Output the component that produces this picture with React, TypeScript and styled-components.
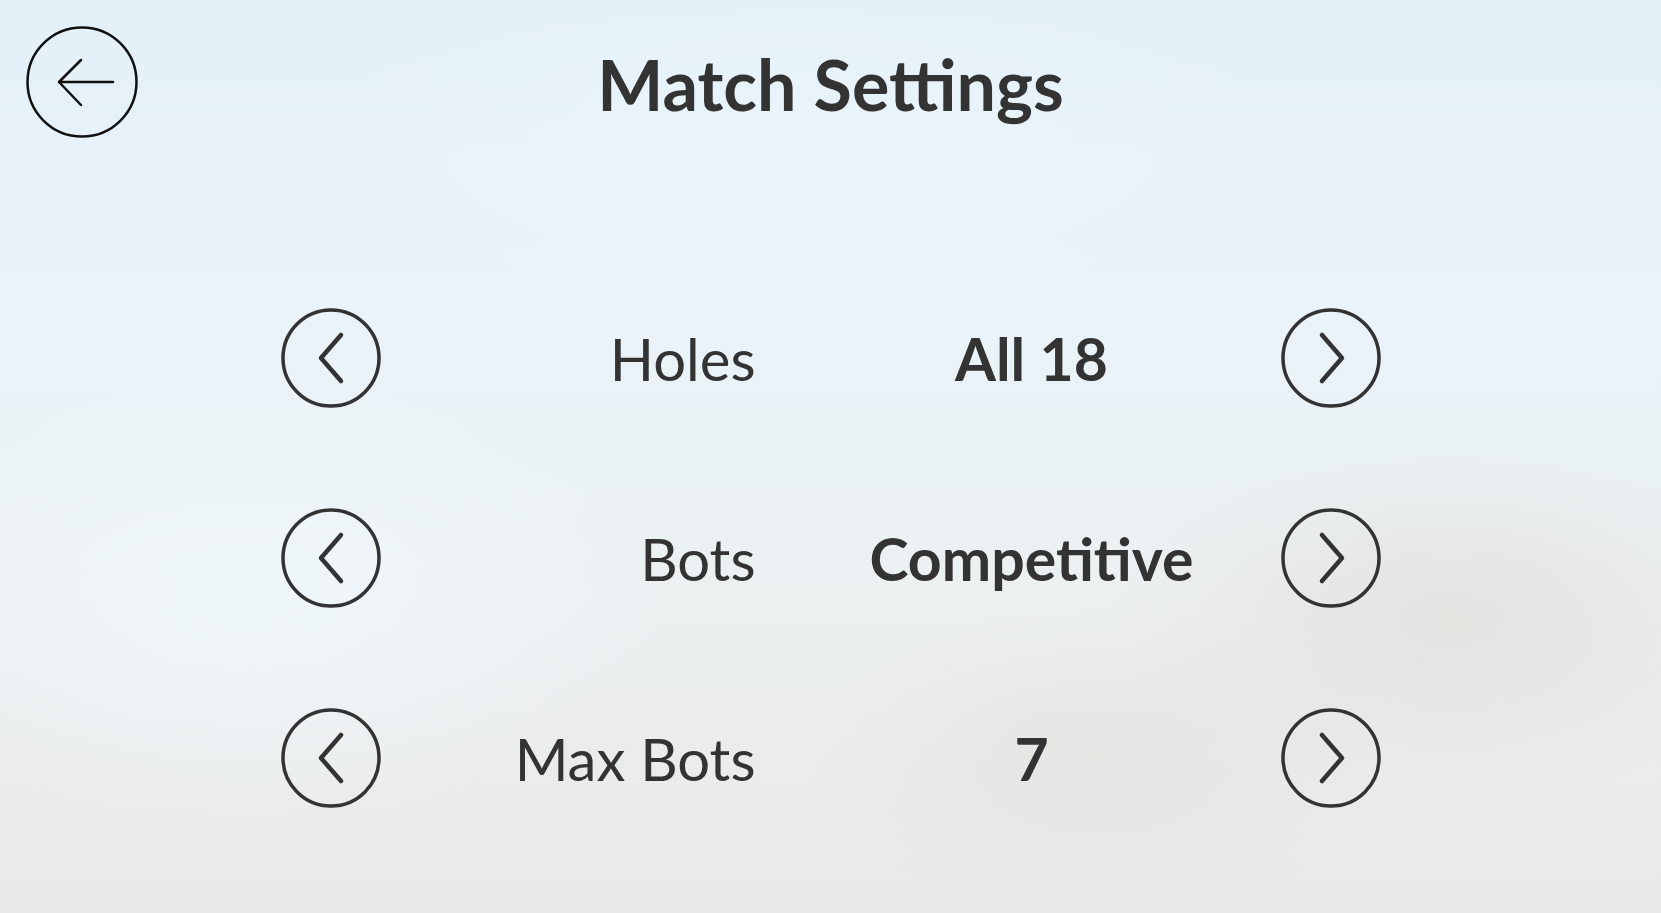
import React from "react";
import styled, { createGlobalStyle } from "styled-components";

const GlobalStyle = createGlobalStyle`
    html, body {
        margin: 0;
        padding: 0;
        height: 100%;
        overflow: hidden;
    }
    body {
        font-family: Lato, "Open Sans", sans-serif;
        color: #333;
    }
`;

const Screen = styled.div`
    width: 100vw;
    height: 100vh;
    box-sizing: border-box;
    background:
        radial-gradient(ellipse 500px 260px at 1450px 620px, rgba(226, 226, 222, 0.9), transparent 70%),
        radial-gradient(ellipse 420px 220px at 1100px 760px, rgba(228, 228, 224, 0.8), transparent 70%),
        radial-gradient(ellipse 600px 320px at 250px 600px, rgba(240, 247, 251, 0.95), transparent 70%),
        radial-gradient(ellipse 700px 260px at 800px 140px, rgba(233, 244, 251, 0.9), transparent 70%),
        linear-gradient(180deg, #e4f0f8 0%, #e9f3f9 35%, #ecf0f1 65%, #e9e9e7 100%);
`;

const Header = styled.div`
    display: grid;
    grid-template-columns: 112px 1fr 112px;
    padding: 26px 26px 0 26px;
`;

const BackButton = styled.button`
    width: 112px;
    height: 112px;
    padding: 0;
    border: none;
    background: none;
    cursor: pointer;
    display: flex;

    svg {
        display: block;
    }
`;

const Title = styled.h1`
    margin: 16px 0 0 0;
    text-align: center;
    font-family: Lato, sans-serif;
    font-weight: 700;
    font-size: 70px;
    line-height: 1.2;
    color: #333;
`;

const Settings = styled.div`
    margin: 120px auto 0 auto;
    width: 1100px;
    display: flex;
    flex-direction: column;
`;

const Row = styled.div`
    height: 200px;
    display: grid;
    grid-template-columns: 100px 375px 525px 100px;
    align-items: center;
`;

const ArrowButton = styled.button`
    width: 100px;
    height: 100px;
    padding: 0;
    border: none;
    background: none;
    cursor: pointer;
    display: flex;
`;

const Label = styled.div`
    justify-self: end;
    font-size: 58px;
    font-weight: 400;
    color: #333;
    white-space: nowrap;
`;

const Value = styled.div`
    text-align: center;
    padding-left: 27px;
    font-size: 59px;
    font-weight: 700;
    color: #333;
    white-space: nowrap;
`;

function BackIcon() {
    return (
        <svg width="112" height="112" viewBox="0 0 112 112" fill="none">
            <circle cx="56" cy="56" r="54.5" stroke="#111" strokeWidth="2.5" />
            <path d="M33 56 H87 M55 34 L33 56 L55 79" stroke="#111" strokeWidth="2.5" strokeLinecap="round" strokeLinejoin="round" />
        </svg>
    );
}

function Chevron(props: { dir: "left" | "right" }) {
    const d = props.dir === "left" ? "M60 27 L40 50 L60 73" : "M41 27 L61 50 L41 73";
    return (
        <svg width="100" height="100" viewBox="0 0 100 100" fill="none">
            <circle cx="50" cy="50" r="48" stroke="#333" strokeWidth="3.5" />
            <path d={d} stroke="#333" strokeWidth="4.5" strokeLinecap="round" strokeLinejoin="round" />
        </svg>
    );
}

const settings = [
    { label: "Holes", value: "All 18" },
    { label: "Bots", value: "Competitive" },
    { label: "Max Bots", value: "7" },
];

export default function App() {
    return (
        <Screen>
            <GlobalStyle />
            <Header>
                <BackButton aria-label="Back">
                    <BackIcon />
                </BackButton>
                <Title>Match Settings</Title>
                <div />
            </Header>
            <Settings>
                {settings.map((s) => (
                    <Row key={s.label}>
                        <ArrowButton aria-label="Previous">
                            <Chevron dir="left" />
                        </ArrowButton>
                        <Label>{s.label}</Label>
                        <Value>{s.value}</Value>
                        <ArrowButton aria-label="Next">
                            <Chevron dir="right" />
                        </ArrowButton>
                    </Row>
                ))}
            </Settings>
        </Screen>
    );
}
